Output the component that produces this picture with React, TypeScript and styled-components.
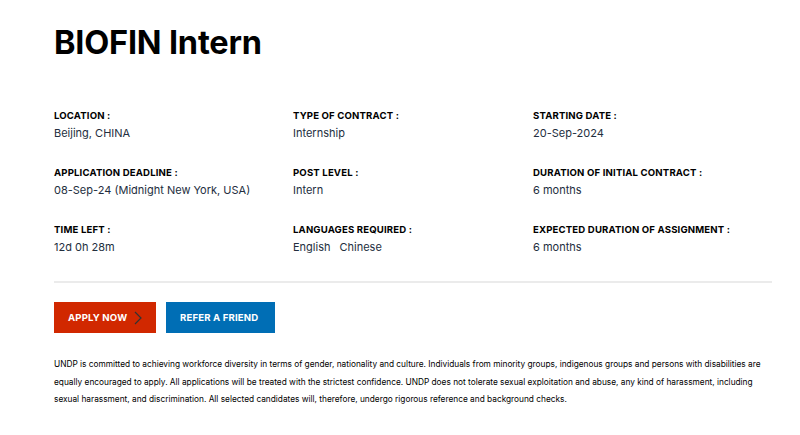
import React from "react";
import styled, { createGlobalStyle } from "styled-components";

const GlobalStyle = createGlobalStyle`
  body {
    margin: 0;
    background: #ffffff;
    font-family: Inter, "Liberation Sans", sans-serif;
    color: #000000;
  }
`;

type Detail = { label: string; value: string[] };

const details: Detail[] = [
  { label: "LOCATION :", value: ["Beijing, CHINA"] },
  { label: "TYPE OF CONTRACT :", value: ["Internship"] },
  { label: "STARTING DATE :", value: ["20-Sep-2024"] },
  { label: "APPLICATION DEADLINE :", value: ["08-Sep-24 (Midnight New York, USA)"] },
  { label: "POST LEVEL :", value: ["Intern"] },
  { label: "DURATION OF INITIAL CONTRACT :", value: ["6 months"] },
  { label: "TIME LEFT :", value: ["12d 0h 28m"] },
  { label: "LANGUAGES REQUIRED :", value: ["English", "Chinese"] },
  { label: "EXPECTED DURATION OF ASSIGNMENT :", value: ["6 months"] },
];

export default function App() {
  return (
    <>
      <GlobalStyle />
      <Page>
        <Title>BIOFIN Intern</Title>
        <DetailsGrid>
          {details.map((d) => (
            <DetailItem key={d.label}>
              <Label>{d.label}</Label>
              <Value>
                {d.value.map((v) => (
                  <span key={v}>{v}</span>
                ))}
              </Value>
            </DetailItem>
          ))}
        </DetailsGrid>
        <Divider />
        <Actions>
          <Button $variant="primary">
            APPLY NOW
            <Chevron width="8" height="14" viewBox="0 0 8 14">
              <path d="M1 1l6 6-6 6" fill="none" stroke="#333" strokeWidth="1.2" />
            </Chevron>
          </Button>
          <Button $variant="secondary">REFER A FRIEND</Button>
        </Actions>
        <Disclaimer>
          UNDP is committed to achieving workforce diversity in terms of gender, nationality and
          culture. Individuals from minority groups, indigenous groups and persons with disabilities
          are equally encouraged to apply. All applications will be treated with the strictest
          confidence. UNDP does not tolerate sexual exploitation and abuse, any kind of harassment,
          including sexual harassment, and discrimination. All selected candidates will, therefore,
          undergo rigorous reference and background checks.
        </Disclaimer>
      </Page>
    </>
  );
}

const Page = styled.div`
  width: 718px;
  padding: 24px 0 0 54px;
`;

const Title = styled.h1`
  margin: 0 0 47px;
  font-size: 32.5px;
  line-height: 38px;
  font-weight: 700;
  letter-spacing: -0.2px;
`;

const DetailsGrid = styled.div`
  display: grid;
  grid-template-columns: 239px 240px 239px;
  row-gap: 24px;
`;

const DetailItem = styled.div`
  display: flex;
  flex-direction: column;
  gap: 2px;
`;

const Label = styled.div`
  font-size: 9.6px;
  line-height: 14px;
  font-weight: 700;
  letter-spacing: 0.15px;
  color: #000;
`;

const Value = styled.div`
  display: flex;
  gap: 9px;
  font-size: 11px;
  line-height: 17px;
  color: #232e3e;
`;

const Divider = styled.hr`
  margin: 25px 0 19px;
  border: none;
  height: 2px;
  background: #ebebeb;
`;

const Actions = styled.div`
  display: flex;
  gap: 10px;
`;

const Button = styled.button<{ $variant: "primary" | "secondary" }>`
  display: flex;
  align-items: center;
  gap: 7px;
  height: 31px;
  border: none;
  padding: 0 14px;
  width: ${({ $variant }) => ($variant === "primary" ? "102px" : "109px")};
  background: ${({ $variant }) => ($variant === "primary" ? "#d12800" : "#006eb5")};
  color: #fff;
  font-family: Inter, "Liberation Sans", sans-serif;
  font-size: 9.6px;
  font-weight: 700;
  letter-spacing: 0.15px;
  white-space: nowrap;
  cursor: pointer;
`;

const Chevron = styled.svg`
  display: block;
  flex-shrink: 0;
`;

const Disclaimer = styled.p`
  margin: 23px 0 0;
  font-size: 8.3px;
  line-height: 17.5px;
  color: #000;
`;
